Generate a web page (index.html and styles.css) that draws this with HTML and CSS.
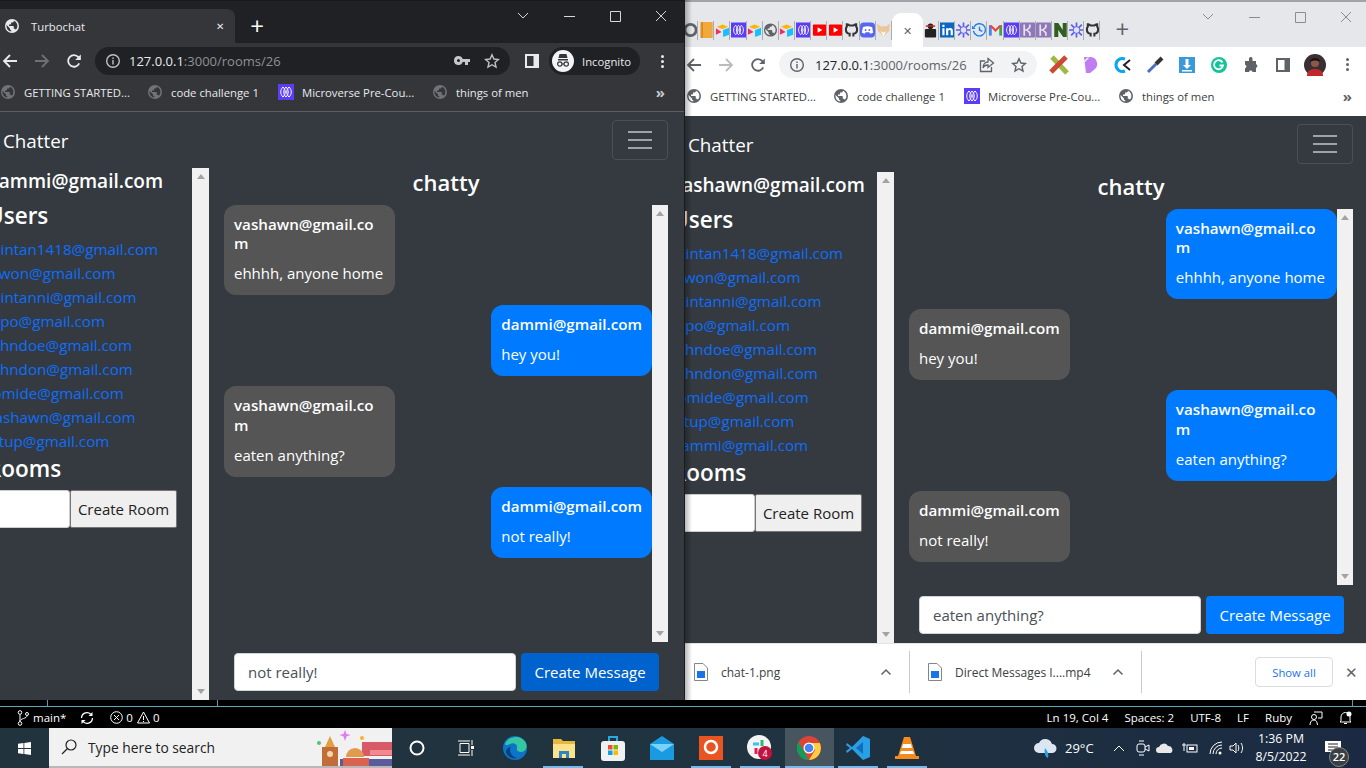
FILE: index.html
```html
<!DOCTYPE html>
<html lang="en">
<head>
<meta charset="utf-8">
<title>Turbochat</title>
<link rel="stylesheet" href="styles.css">
</head>
<body>
<svg class="defs" width="0" height="0" aria-hidden="true">
  <symbol id="globe" viewBox="0 0 16 16"><path fill="currentColor" fill-rule="evenodd" d="M8 1a7 7 0 1 0 0 14A7 7 0 0 0 8 1zM7.3 13.5A5.6 5.6 0 0 1 2.5 8c0-.4 0-.7.1-1L6 10.4v.7c0 .8.6 1.4 1.3 1.4zm4.5-1.8c-.2-.6-.7-1-1.3-1h-.7V8.6c0-.4-.3-.7-.7-.7H5V6.5h1.4c.4 0 .7-.3.7-.7V4.4h1.4c.8 0 1.4-.6 1.4-1.4v-.3c2 .8 3.5 2.8 3.5 5.2 0 1.5-.6 2.8-1.6 3.8z"/></symbol>
  <symbol id="back" viewBox="0 0 16 16"><path fill="none" stroke="currentColor" stroke-width="1.8" d="M15 8H2M8 2 2 8l6 6"/></symbol>
  <symbol id="fwd" viewBox="0 0 16 16"><path fill="none" stroke="currentColor" stroke-width="1.8" d="M1 8h13M8 2l6 6-6 6"/></symbol>
  <symbol id="reload" viewBox="0 0 16 16"><path fill="none" stroke="currentColor" stroke-width="1.8" d="M13.2 10.4A5.8 5.8 0 1 1 12.4 4.2L14 6"/><path fill="currentColor" d="M14.8 1.5v5.6H9.2z"/></symbol>
  <symbol id="info" viewBox="0 0 16 16"><circle cx="8" cy="8" r="6.3" fill="none" stroke="currentColor" stroke-width="1.4"/><path fill="currentColor" d="M7.3 7h1.4v4.5H7.3zM7.3 4.4h1.4v1.5H7.3z"/></symbol>
  <symbol id="star" viewBox="0 0 16 16"><path fill="none" stroke="currentColor" stroke-width="1.4" d="m8 1.8 1.9 4.2 4.5.5-3.4 3 1 4.5L8 11.7 4 14l1-4.5-3.4-3 4.5-.5z"/></symbol>
  <symbol id="side" viewBox="0 0 16 16"><path fill="currentColor" fill-rule="evenodd" d="M1 1h14v14H1zM3 3v10h6.5V3z"/></symbol>
  <symbol id="micro" viewBox="0 0 16 16"><rect width="16" height="16" fill="#5b3df5"/><path fill="none" stroke="#fff" stroke-width="1" d="M5 3c-3 3-3 7 0 10 3-3 3-7 0-10zM8 3c-3 3-3 7 0 10 3-3 3-7 0-10zM11 3c-3 3-3 7 0 10 3-3 3-7 0-10z"/></symbol>
  <symbol id="air" viewBox="0 0 16 16"><path fill="#fcb400" d="m8 2 6 2.5L8 7 2 4.5z"/><path fill="#18bfff" d="M8.6 8 15 5.5V13l-6.400 2.500z"/><path fill="#f82b60" d="M1 6v7l6-3z"/></symbol>
  <symbol id="yt" viewBox="0 0 16 16"><rect x="1" y="2" width="14" height="12" rx="1" fill="#f00"/><path fill="#fff" d="M6 5v6l5-3z"/></symbol>
  <symbol id="gh" viewBox="0 0 16 16"><path fill="none" stroke="#333" stroke-width="2.200" d="M6 15v-3C3 12 2 10 2 7c0-1 .5-2 1-2.700V2c1 0 2 .5 3 1.200h4c1-.7 2-1.200 3-1.200v2.300c.5.7 1 1.700 1 2.700 0 3-1 5-4 5v3"/></symbol>
  <symbol id="spark" viewBox="0 0 16 16"><g stroke="#5b5fe8" stroke-width="1.800"><path d="M8 0v16M0 8h16M2.300 2.300l11.400 11.400M13.700 2.300 2.300 13.700"/></g><circle cx="8" cy="8" r="3.600" fill="#e0e2ff" stroke="#5b5fe8"/></symbol>
  <symbol id="hk" viewBox="0 0 16 16"><rect width="16" height="16" rx="1" fill="#8e78b8"/><path fill="none" stroke="#e8e2f2" stroke-width="1.800" d="M4.500 2v12M4.500 8h3l3-3V2M7.500 8l3 3v3"/></symbol>
  <symbol id="chev" viewBox="0 0 12 12"><path fill="none" stroke="currentColor" stroke-width="1.500" d="m1.500 8.500 4.500-4.500 4.500 4.500"/></symbol>
  <symbol id="file" viewBox="0 0 14 18"><path fill="#fff" stroke="#80868b" d="M.5.500h8.500l4.500 4.500v12.500H.5z"/><rect x="3" y="8" width="8" height="7" fill="#1a73e8"/></symbol>
</svg>

<main class="desktop">
  <section class="win win-dark">
    <div class="strip">
      <div class="dark-tab"><svg class="ic16" width="16" height="16"><use href="#globe"/></svg><span class="tab-title">Turbochat</span><span class="tab-x">✕</span></div>
      <span class="plus">+</span>
      <div class="caps">
        <span class="cap"><svg width="12" height="8" viewBox="0 0 12 8"><path fill="none" stroke="currentColor" d="m1 1 5 5 5-5"/></svg></span>
        <span class="cap"><svg width="11" height="11" viewBox="0 0 11 11"><path stroke="currentColor" d="M0 5.500h11"/></svg></span>
        <span class="cap"><svg width="11" height="11" viewBox="0 0 11 11"><path fill="none" stroke="currentColor" d="M.5.500h10v10H.5z"/></svg></span>
        <span class="cap"><svg width="12" height="12" viewBox="0 0 12 12"><path stroke="currentColor" d="m1 1 10 10M11 1 1 11"/></svg></span>
      </div>
    </div>
    <div class="bar bar-dark">
      <span class="btn"><svg width="16" height="16"><use href="#back"/></svg></span>
      <span class="btn btn-dim"><svg width="16" height="16"><use href="#fwd"/></svg></span>
      <span class="btn"><svg width="16" height="16"><use href="#reload"/></svg></span>
      <div class="omni omni-dark">
        <svg class="omni-info" width="16" height="16"><use href="#info"/></svg>
        <span class="url"><b>127.0.0.1</b>:3000/rooms/26</span>
        <svg class="key" width="16" height="10" viewBox="0 0 16 10"><path fill="currentColor" fill-rule="evenodd" d="M4.500 0a4.500 4.500 0 0 1 4.200 3H16v3h-2v3h-3V6H8.700A4.500 4.500 0 1 1 4.500 0zm0 3a1.500 1.500 0 1 0 0 3 1.500 1.500 0 0 0 0-3z"/></svg>
        <svg class="omni-star" width="16" height="16"><use href="#star"/></svg>
      </div>
      <span class="btn btn-side"><svg width="16" height="16"><use href="#side"/></svg></span>
      <div class="pill">
        <svg width="22" height="22" viewBox="0 0 22 22"><circle cx="11" cy="11" r="11" fill="#f1f3f4"/><path fill="#35363a" d="M6 9h10v1.400H6zM7.500 4h7l1 4h-9z"/><g fill="none" stroke="#35363a" stroke-width="1.200"><circle cx="7.800" cy="14" r="2.200"/><circle cx="14.200" cy="14" r="2.200"/><path d="M10 14h2"/></g></svg>
        <span>Incognito</span>
      </div>
      <span class="dots"><i></i><i></i><i></i></span>
    </div>
    <div class="marks marks-dark">
      <span class="bm bm1"><svg class="ic16 globe-dim" width="16" height="16"><use href="#globe"/></svg>GETTING STARTED...</span>
      <span class="bm bm2"><svg class="ic16 globe-dim" width="16" height="16"><use href="#globe"/></svg>code challenge 1</span>
      <span class="bm bm3"><svg class="ic16" width="16" height="16"><use href="#micro"/></svg>Microverse Pre-Cou...</span>
      <span class="bm"><svg class="ic16 globe-dim" width="16" height="16"><use href="#globe"/></svg>things of men</span>
      <span class="more">»</span>
    </div>
    <div class="page">
      <nav class="nav"><span class="brand">Chatter</span><span class="burger"><i></i><i></i><i></i></span></nav>
      <div class="row">
        <aside class="side">
          <h5 class="me">dammi@gmail.com</h5>
          <h3 class="head">Users</h3>
          <a class="user">faintan1418@gmail.com</a><a class="user">kiwon@gmail.com</a><a class="user">faintanni@gmail.com</a><a class="user">dipo@gmail.com</a><a class="user">johndoe@gmail.com</a><a class="user">johndon@gmail.com</a><a class="user">tomide@gmail.com</a><a class="user">vashawn@gmail.com</a><a class="user">kitup@gmail.com</a>
          <h3 class="head">Rooms</h3>
          <div class="room"><input class="room-in" type="text" aria-label="Room"><button class="room-btn">Create Room</button></div>
        </aside>
        <div class="track track-side"><i class="up"></i><i class="down"></i></div>
        <div class="chat">
          <h4 class="title">chatty</h4>
          <div class="scrollwrap">
            <div class="msgs">
              <div class="bub bub-wide other"><h6 class="who">vashawn@gmail.co<br>m</h6><p class="say">ehhhh, anyone home</p></div>
              <div class="bub mine"><h6 class="who">dammi@gmail.com</h6><p class="say">hey you!</p></div>
              <div class="bub bub-wide other"><h6 class="who">vashawn@gmail.co<br>m</h6><p class="say">eaten anything?</p></div>
              <div class="bub mine"><h6 class="who">dammi@gmail.com</h6><p class="say">not really!</p></div>
            </div>
            <div class="track track-msg"><i class="up"></i><i class="down"></i></div>
          </div>
          <form class="send"><input class="send-in" type="text" value="not really!" aria-label="Message"><button class="send-btn send-active" type="button">Create Message</button></form>
        </div>
      </div>
    </div>
  </section>

  <section class="win win-light">
    <div class="strip strip-light">
      <div class="tabs">
        <span class="t"><svg width="16" height="16" viewBox="0 0 16 16"><circle cx="8" cy="8" r="6" fill="none" stroke="#5f6368" stroke-width="3"/></svg></span>
        <span class="t"><svg width="16" height="18" viewBox="0 0 16 18"><rect x="1" y="0" width="14" height="18" rx="1" fill="#f2a93b"/><path stroke="#b36f10" d="M3 0v18"/></svg></span>
        <span class="t"><svg width="16" height="16"><use href="#air"/></svg></span>
        <span class="t"><svg width="16" height="16"><use href="#micro"/></svg></span>
        <span class="t"><svg width="16" height="16"><use href="#air"/></svg></span>
        <span class="t t-gray"><svg width="16" height="16"><use href="#globe"/></svg></span>
        <span class="t"><svg width="16" height="16"><use href="#air"/></svg></span>
        <span class="t"><svg width="16" height="16"><use href="#micro"/></svg></span>
        <span class="t"><svg width="16" height="16"><use href="#yt"/></svg></span>
        <span class="t"><svg width="16" height="16"><use href="#yt"/></svg></span>
        <span class="t"><svg width="16" height="16"><use href="#gh"/></svg></span>
        <span class="t"><svg width="16" height="16" viewBox="0 0 16 16"><rect width="16" height="16" rx="4" fill="#5865f2"/><path fill="#fff" d="M3 5c3-1.500 7-1.500 10 0l1 6-3 1-1-1.500H6L5 12l-3-1z"/><circle cx="6" cy="8" r="1" fill="#5865f2"/><circle cx="10" cy="8" r="1" fill="#5865f2"/></svg></span>
        <span class="t"><svg width="16" height="16" viewBox="0 0 16 16"><path fill="#e9c79a" d="m1 1 4 3h6l4-3-1 8-6 6-6-6z"/><path fill="#fff" d="m5 9 3 6 3-6-3 2z"/></svg></span>
        <span class="active-tab">✕</span>
        <span class="t"><svg width="16" height="16" viewBox="0 0 16 16"><rect x="2" y="7" width="12" height="9" rx="1" fill="#222"/><circle cx="8" cy="4" r="3" fill="#222"/><path fill="#d92020" d="M3 3h10v1.500H3z"/></svg></span>
        <span class="t"><svg width="16" height="16" viewBox="0 0 16 16"><rect width="16" height="16" fill="#0a66c2"/><path fill="#fff" d="M2.500 6h2.300v7.500H2.500zM2.500 2.500h2.300v2.300H2.500zM6.500 6h2.200v1c1-1.600 5-1.700 5 1.800v4.700h-2.300V9.500c0-2-2.600-1.800-2.600 0v4H6.500z"/></svg></span>
        <span class="t"><svg width="16" height="16"><use href="#spark"/></svg></span>
        <span class="t"><svg width="16" height="16" viewBox="0 0 16 16"><path fill="none" stroke="#1a80e8" stroke-width="1.500" d="M2 5a6.500 6.500 0 1 1-.5 4M8 4.500V8l3 1.500"/><path fill="#1a80e8" d="M0 3.500 4 7H0z"/></svg></span>
        <span class="t"><svg width="16" height="16" viewBox="0 0 16 16"><path fill="#4285f4" d="M1 3h3v11H1z"/><path fill="#34a853" d="M12 3h3v11h-3z"/><path fill="#ea4335" d="m1 3 3 0 4 4 4-4h3L8 10z"/></svg></span>
        <span class="t"><svg width="16" height="16"><use href="#micro"/></svg></span>
        <span class="t"><svg width="16" height="16"><use href="#hk"/></svg></span>
        <span class="t"><svg width="16" height="16"><use href="#hk"/></svg></span>
        <span class="t"><svg width="16" height="18" viewBox="0 0 16 18"><path fill="#2f5e1e" d="M1 1h4.500l5 8V1H15v16h-4L5.500 9v8H1z"/></svg></span>
        <span class="t"><svg width="16" height="16"><use href="#spark"/></svg></span>
        <span class="t"><svg width="16" height="16"><use href="#gh"/></svg></span>
      </div>
      <span class="plus plus-light">+</span>
      <div class="caps caps-light">
        <span class="cap"><svg width="12" height="8" viewBox="0 0 12 8"><path fill="none" stroke="currentColor" d="m1 1 5 5 5-5"/></svg></span>
        <span class="cap"><svg width="11" height="11" viewBox="0 0 11 11"><path stroke="currentColor" d="M0 5.500h11"/></svg></span>
        <span class="cap"><svg width="11" height="11" viewBox="0 0 11 11"><path fill="none" stroke="currentColor" d="M.5.500h10v10H.5z"/></svg></span>
        <span class="cap"><svg width="12" height="12" viewBox="0 0 12 12"><path stroke="currentColor" d="m1 1 10 10M11 1 1 11"/></svg></span>
      </div>
    </div>
    <div class="bar bar-light">
      <span class="btn"><svg width="16" height="16"><use href="#back"/></svg></span>
      <span class="btn btn-dim-light"><svg width="16" height="16"><use href="#fwd"/></svg></span>
      <span class="btn"><svg width="16" height="16"><use href="#reload"/></svg></span>
      <div class="omni omni-light">
        <svg class="omni-info" width="16" height="16"><use href="#info"/></svg>
        <span class="url"><b>127.0.0.1</b>:3000/rooms/26</span>
        <svg class="share" width="16" height="16" viewBox="0 0 16 16"><path fill="none" stroke="currentColor" stroke-width="1.300" d="M6 4H1.500v10.500h11V10M9 1.500 14.500 6 9 10.500V8C6 8 4.500 9.500 4 11c0-3.500 2-6 5-6z"/></svg>
        <svg class="omni-star" width="16" height="16"><use href="#star"/></svg>
      </div>
      <div class="exts">
        <span class="ext"><svg width="20" height="20" viewBox="0 0 20 20"><path stroke="#9bbb45" stroke-width="5" d="m3 2 15 16"/><path stroke="#cc4a33" stroke-width="5" d="M17 2 2 17"/></svg></span>
        <span class="ext"><svg width="18" height="18" viewBox="0 0 18 18"><path fill="#c07df2" d="M2 1h7a7 7 0 0 1 4 12l-5 4H4z"/><path fill="#f1f3f4" d="m1 6 5-5 1 1-6 6z"/></svg></span>
        <span class="ext"><svg width="18" height="18" viewBox="0 0 18 18"><path fill="none" stroke="#0aa5f0" stroke-width="3" d="M11 3a6.500 6.500 0 1 0 0 12"/><path fill="none" stroke="#222" stroke-width="2" d="m16 4-6 5 6 5"/></svg></span>
        <span class="ext"><svg width="18" height="18" viewBox="0 0 18 18"><path stroke="#4d6cc4" stroke-width="3" d="m2 16 8-8"/><path stroke="#333" stroke-width="4" d="m10 8 6-6"/></svg></span>
        <span class="ext"><svg width="16" height="16" viewBox="0 0 16 16"><rect width="16" height="16" fill="#3a9ad9"/><path fill="#fff" d="M6.500 2h3v6H12l-4 4-4-4h2.500zM3 13h10v1.500H3z"/></svg></span>
        <span class="ext"><svg width="16" height="16" viewBox="0 0 16 16"><circle cx="8" cy="8" r="8" fill="#15c39a"/><path fill="none" stroke="#fff" stroke-width="1.800" d="M11.500 5.500a4.500 4.500 0 1 0 .5 3H8.500"/></svg></span>
        <span class="ext ext-gray"><svg width="16" height="16" viewBox="0 0 16 16"><path fill="currentColor" d="M6 1.500a1.800 1.800 0 0 1 3.500 0V4H13v3.300a1.800 1.800 0 0 1 0 3.500V15H9.500a1.800 1.800 0 0 0-3.500 0H2v-3.800a1.800 1.800 0 0 0 0-3.500V4h4z"/></svg></span>
        <span class="ext ext-gray"><svg width="16" height="16"><use href="#side"/></svg></span>
        <span class="ext"><svg width="22" height="22" viewBox="0 0 22 22"><circle cx="11" cy="11" r="11" fill="#3a2f32"/><path fill="#c0282c" d="M3 22c0-5 3-7 8-7s8 2 8 7z"/><circle cx="11" cy="9" r="4" fill="#8a5a44"/><path fill="#15110f" d="M6 8c0-5 10-5 10 0-3-2-7-2-10 0z"/></svg></span>
        <span class="dots dots-light"><i></i><i></i><i></i></span>
      </div>
    </div>
    <div class="marks marks-light">
      <span class="bm bm1"><svg class="ic16" width="16" height="16"><use href="#globe"/></svg>GETTING STARTED...</span>
      <span class="bm bm2"><svg class="ic16" width="16" height="16"><use href="#globe"/></svg>code challenge 1</span>
      <span class="bm bm3"><svg class="ic16" width="16" height="16"><use href="#micro"/></svg>Microverse Pre-Cou...</span>
      <span class="bm"><svg class="ic16" width="16" height="16"><use href="#globe"/></svg>things of men</span>
      <span class="more">»</span>
    </div>
    <div class="page">
      <nav class="nav"><span class="brand">Chatter</span><span class="burger"><i></i><i></i><i></i></span></nav>
      <div class="row">
        <aside class="side">
          <h5 class="me">vashawn@gmail.com</h5>
          <h3 class="head">Users</h3>
          <a class="user">faintan1418@gmail.com</a><a class="user">kiwon@gmail.com</a><a class="user">faintanni@gmail.com</a><a class="user">dipo@gmail.com</a><a class="user">johndoe@gmail.com</a><a class="user">johndon@gmail.com</a><a class="user">tomide@gmail.com</a><a class="user">kitup@gmail.com</a><a class="user">dammi@gmail.com</a>
          <h3 class="head">Rooms</h3>
          <div class="room"><input class="room-in" type="text" aria-label="Room"><button class="room-btn">Create Room</button></div>
        </aside>
        <div class="track track-side"><i class="up"></i><i class="down"></i></div>
        <div class="chat">
          <h4 class="title">chatty</h4>
          <div class="scrollwrap">
            <div class="msgs">
              <div class="bub bub-wide mine"><h6 class="who">vashawn@gmail.co<br>m</h6><p class="say">ehhhh, anyone home</p></div>
              <div class="bub other"><h6 class="who">dammi@gmail.com</h6><p class="say">hey you!</p></div>
              <div class="bub bub-wide mine"><h6 class="who">vashawn@gmail.co<br>m</h6><p class="say">eaten anything?</p></div>
              <div class="bub other"><h6 class="who">dammi@gmail.com</h6><p class="say">not really!</p></div>
            </div>
            <div class="track track-msg"><i class="up"></i><i class="down"></i></div>
          </div>
          <form class="send"><input class="send-in" type="text" value="eaten anything?" aria-label="Message"><button class="send-btn" type="button">Create Message</button></form>
        </div>
      </div>
    </div>
    <div class="downloads">
      <span class="dl dl1"><svg width="14" height="18"><use href="#file"/></svg><span class="dl-name">chat-1.png</span><svg class="dl-chev" width="12" height="12"><use href="#chev"/></svg></span>
      <span class="dl dl2"><svg width="14" height="18"><use href="#file"/></svg><span class="dl-name">Direct Messages I....mp4</span><svg class="dl-chev" width="12" height="12"><use href="#chev"/></svg></span>
      <span class="show">Show all</span>
      <span class="dl-x">✕</span>
    </div>
  </section>

  <div class="seam"><i class="s1"></i><i class="s2"></i><i class="s3"></i></div>
  <footer class="status">
    <svg class="git" width="12" height="16" viewBox="0 0 12 16"><g fill="none" stroke="#fff"><circle cx="3" cy="2.500" r="1.800"/><circle cx="3" cy="13.500" r="1.800"/><circle cx="10" cy="4" r="1.500"/><path d="M3 4.500v7M10 5.500C10 9 3 8 3 11.500"/></g></svg>
    <span class="st-main">main*</span>
    <svg class="sync" width="14" height="14" viewBox="0 0 14 14"><path fill="none" stroke="#fff" stroke-width="1.300" d="M1.500 7a5.500 5.500 0 0 1 10-3M12.500 7a5.500 5.500 0 0 1-10 3"/><path fill="#fff" d="M12.500 1v4h-4zM1.500 13V9h4z"/></svg>
    <svg class="err" width="13" height="13" viewBox="0 0 13 13"><circle cx="6.500" cy="6.500" r="5.800" fill="none" stroke="#fff"/><path stroke="#fff" d="m4 4 5 5M9 4 4 9"/></svg><span class="num">0</span>
    <svg class="warn" width="13" height="13" viewBox="0 0 13 13"><path fill="none" stroke="#fff" d="M6.500 1 12.500 12H.5zM6.500 5v4M6.500 10v1"/></svg><span class="num">0</span>
    <span class="st-right">
      <span class="st1">Ln 19, Col 4</span><span class="st2">Spaces: 2</span><span class="st3">UTF-8</span><span class="st4">LF</span><span class="st5">Ruby</span>
      <svg class="st-person" width="14" height="14" viewBox="0 0 14 14"><g fill="none" stroke="#fff"><path d="M5 1h8v6H9"/><circle cx="5" cy="6" r="2.500"/><path d="M1 14c0-3 1.500-5 4-5s3 2 3.500 5"/></g></svg>
      <svg class="st-bell" width="13" height="14" viewBox="0 0 13 14"><path fill="none" stroke="#fff" d="M2 10V6a4.500 4.500 0 0 1 9 0v4l1 1H1zM5 12.500h3"/><circle cx="10" cy="3" r="2.500" fill="#fff"/></svg>
    </span>
  </footer>
  <div class="taskbar">
    <span class="start"><svg width="13" height="13" viewBox="0 0 13 13"><path fill="#fff" d="M0 1.800 5.500 1v5H0zM6.300.9 13 0v6H6.300zM0 7h5.500v5L0 11.200zM6.300 7H13v6l-6.700-.9z"/></svg></span>
    <div class="search">
      <svg class="lens" width="16" height="16" viewBox="0 0 16 16"><circle cx="10" cy="6" r="5" fill="none" stroke="#222" stroke-width="1.200"/><path stroke="#222" stroke-width="1.200" d="m6.500 9.500-5.500 5.500"/></svg>
      <span class="search-txt">Type here to search</span>
      <svg class="art" width="92" height="40" viewBox="0 0 92 40"><circle cx="19" cy="16" r="2" fill="#4cc76a"/><path fill="#e27bee" d="m45 3 1.500 4 4 1-4 1.500L45 14l-1.500-4.500-4-1.500 4-1z"/><circle cx="62" cy="11" r="2" fill="#f6b52c"/><path fill="#c26c3a" d="M22 20h16v20H22z"/><path fill="#e0a040" d="m25 20 5-11 5 11z"/><circle cx="30" cy="27" r="3" fill="#f3d9a5"/><path fill="#d85a66" d="M62 15h30v14H62z"/><path fill="#f08a90" d="M70 23h22v5H70z"/><path fill="#5a5a9c" d="M40 32h52v8H40z"/><path fill="#e29a4c" d="M46 30a9 9 0 0 1 18 0z"/><path fill="#d9634f" d="M43 31h26v9H43z"/></svg>
    </div>
    <div class="apps">
      <span class="app"><svg width="16" height="16" viewBox="0 0 16 16"><circle cx="8" cy="8" r="6.500" fill="none" stroke="#fff" stroke-width="2"/></svg></span>
      <span class="app"><svg width="16" height="16" viewBox="0 0 16 16"><g fill="none" stroke="#fff"><path d="M2 3.500h9v9H2zM0 1h12M0 15h12M14 0v5M14 10v6"/></g><rect x="13" y="6" width="3" height="3" fill="#fff"/></svg></span>
      <span class="app"><svg width="24" height="24" viewBox="0 0 24 24"><circle cx="12" cy="12" r="12" fill="#0c74c9"/><path fill="#35c7a0" d="M2 8C5 0 18-2 23 7c2 5-1 9-5 9-3 0-5-2-4-4 1-3-3-6-7-4-2 1-4 2-5 0z"/><path fill="#07407e" d="M7 14c0 4 3 7 7 8-6 1-10-2-11-6 0-3 3-5 5-5-1 1-1 2-1 3z"/></svg></span>
      <span class="app app-on"><svg width="24" height="22" viewBox="0 0 24 22"><path fill="#e8b73c" d="M1 2h8l2 2h12v17H1z"/><path fill="#fbe28b" d="M1 7h22v14H1z"/><path fill="#2a86c8" d="M7 14h10v7h-3v-4h-4v4H7z"/></svg></span>
      <span class="app"><svg width="24" height="26" viewBox="0 0 24 26"><path fill="none" stroke="#2aa9e0" stroke-width="2" d="M8 7V2h8v5"/><rect y="6" width="24" height="20" rx="3" fill="#f1f1f1"/><path fill="#f25022" d="M7 10h4.500v4.500H7z"/><path fill="#7fba00" d="M12.500 10H17v4.500h-4.500z"/><path fill="#00a4ef" d="M7 15.500h4.500V20H7z"/><path fill="#ffb900" d="M12.500 15.500H17V20h-4.500z"/></svg></span>
      <span class="app"><svg width="24" height="24" viewBox="0 0 24 24"><path fill="#1a9ae0" d="M0 8 12 0l12 8v16H0z"/><path fill="#7ad3f7" d="M0 8h24L12 16z"/></svg></span>
      <span class="app app-on"><svg width="24" height="24" viewBox="0 0 24 24"><rect width="24" height="24" fill="#e95420"/><circle cx="12" cy="11" r="6" fill="none" stroke="#fff" stroke-width="2.500"/><circle cx="12" cy="11" r="2" fill="#e95420"/></svg></span>
      <span class="app app-on"><svg width="26" height="26" viewBox="0 0 26 26"><circle cx="12" cy="12" r="12" fill="#f4f4f4"/><path stroke="#36c5f0" stroke-width="3" d="M6 9h6"/><path stroke="#2eb67d" stroke-width="3" d="M15 5v6"/><path stroke="#e01e5a" stroke-width="3" d="M9 13v6"/><circle cx="18" cy="18" r="7" fill="#c4123f"/><text class="badge-num" x="18" y="22" text-anchor="middle">4</text></svg></span>
      <span class="app app-on is-active"><svg width="24" height="24" viewBox="0 0 24 24"><circle cx="12" cy="12" r="12" fill="#db4437"/><path fill="#0f9d58" d="M1.500 6 8 17l4 7A12 12 0 0 1 1.500 6z"/><path fill="#ffcd40" d="M12 7h10.800a12 12 0 0 1-10.800 17l6-10z"/><circle cx="12" cy="12" r="5.500" fill="#fff"/><circle cx="12" cy="12" r="4.300" fill="#4285f4"/></svg></span>
      <span class="app app-on"><svg width="24" height="24" viewBox="0 0 24 24"><path fill="#2b9fe6" d="M17 0 24 3v18l-7 3L6 13 1 17l-1-2 4-3-4-3 1-2 5 4z"/><path fill="#0d6fb8" d="M17 6 10 12l7 6z"/></svg></span>
      <span class="app app-on"><svg width="24" height="24" viewBox="0 0 24 24"><path fill="#f58a1f" d="M9 1h6l6 19h3v3H0v-3h3z"/><path fill="#fff" d="M8 8h8l1 4H7zM6 15h12l1 3H5z"/></svg></span>
    </div>
    <div class="tray">
      <svg class="tr-cloud" width="24" height="24" viewBox="0 0 24 24"><path fill="#dbe6f2" d="M6 17a5 5 0 0 1 0-10 7 7 0 0 1 13 1 4.500 4.500 0 0 1 0 9z"/><path fill="#2a9fe0" d="M12 12c3 3 4 7 3 10-3-1-4-5-3-10z"/></svg>
      <span class="tr-temp">29°C</span>
      <svg class="tr-up" width="12" height="8" viewBox="0 0 12 8"><path fill="none" stroke="#fff" d="m1 7 5-5 5 5"/></svg>
      <svg class="tr-meet" width="14" height="16" viewBox="0 0 14 16"><g fill="none" stroke="#fff"><rect x="1" y="4" width="8" height="8" rx="2"/><path d="m9 7 4-2v6l-4-2M3 1h5M3 15h5"/></g></svg>
      <svg class="tr-drive" width="17" height="10" viewBox="0 0 17 10"><path fill="#e8e8e8" d="M3 10a3 3 0 0 1 0-6 5 5 0 0 1 9-1 4 4 0 0 1 3 7z"/></svg>
      <svg class="tr-bat" width="16" height="12" viewBox="0 0 16 12"><g fill="none" stroke="#fff"><rect x="5" y="3" width="10" height="7"/><path d="M0 3h4M2 1v8"/></g><rect x="7" y="5" width="5" height="3" fill="#fff"/></svg>
      <svg class="tr-wifi" width="14" height="14" viewBox="0 0 14 14"><g fill="none" stroke="#fff"><path d="M1 13A12 12 0 0 1 13 1M4 13a9 9 0 0 1 9-9M7 13a6 6 0 0 1 6-6"/></g><circle cx="11" cy="12" r="1.500" fill="#fff"/></svg>
      <svg class="tr-vol" width="16" height="14" viewBox="0 0 16 14"><g fill="none" stroke="#fff"><path d="M1 5h3l3-3v10L4 9H1zM9 4c1 2 1 4 0 6M12 2c2 3 2 7 0 10"/></g></svg>
      <span class="clock"><span>1:36 PM</span><span>8/5/2022</span></span>
      <span class="notif"><svg width="16" height="14" viewBox="0 0 16 14"><path fill="#fff" d="M0 0h16v11H0z"/><path stroke="#222" d="M3 3h10M3 6h10M3 9h7"/></svg><span class="notif-n">22</span></span>
    </div>
  </div>
</main>
</body>
</html>
```

FILE: styles.css
```css
* { box-sizing: border-box; }
html, body { margin: 0; height: 100%; background: #000; }
body { overflow: hidden; font-family: "Open Sans", "Noto Sans", sans-serif; font-size: 15px; color: #fff; }
.defs { position: absolute; }
.desktop { position: relative; width: 1366px; height: 768px; overflow: hidden; background: #000; }
svg { display: block; flex: none; }

/* windows sit on a free desktop */
.win { position: absolute; top: 0; height: 700px; display: flex; flex-direction: column; overflow: hidden; }
.win-dark { left: 0; width: 685px; background: #202124; border-right: 1px solid #1a1b1e; }
.win-light { left: 685px; width: 681px; background: #fff; }
.win-light::after { content: ""; position: absolute; inset: 0 auto 0 0; width: 7px; background: linear-gradient(90deg, rgba(0,0,0,.28), rgba(0,0,0,0)); pointer-events: none; }

/* tab strips */
.strip { flex: none; height: 43px; display: flex; align-items: flex-end; background: #202124; border-top: 1px solid #17181a; }
.dark-tab { width: 235px; height: 34px; background: #35363a; border-radius: 0 8px 0 0; display: flex; align-items: center; padding-left: 4px; font-size: 11.300px; color: #e8eaed; }
.tab-title { margin-left: 11px; }
.tab-x { margin-left: auto; margin-right: 11px; font-size: 10px; }
.plus { width: 24px; margin: 0 0 5px 10px; text-align: center; font-size: 24px; line-height: 24px; font-weight: 400; }
.caps { margin-left: auto; display: flex; align-self: flex-start; color: #d6d7d9; }
.cap { width: 46px; height: 30px; display: flex; align-items: center; justify-content: center; }
.strip-light { height: 47px; background: #e5e7eb; border-top: 2px solid #a0a2a6; }
.tabs { display: flex; align-items: flex-end; margin-left: -3px; }
.t { width: 16.150px; height: 26px; padding-bottom: 8px; display: flex; align-items: center; justify-content: center; position: relative; }
.t svg { width: 15px; height: 16px; }
.t::after { content: ""; position: absolute; right: 0; top: 0; bottom: 7px; width: 1px; background: #a9acb2; }
.t-gray { color: #5f6368; }
.active-tab { width: 31px; height: 34px; background: #fff; border-radius: 9px 9px 0 0; display: flex; align-items: center; justify-content: center; color: #5f6368; font-size: 11px; }
.plus-light { color: #5f6368; margin-bottom: 6px; font-size: 24px; }
.caps-light { color: #8a8c90; margin-right: -3px; }

/* toolbars */
.bar { flex: none; height: 36px; display: flex; align-items: center; }
.bar-dark { background: #35363a; color: #e8eaed; }
.bar-light { background: #fff; height: 35px; color: #5f6368; }
.btn { width: 32px; height: 32px; display: flex; align-items: center; justify-content: center; flex: none; }
.bar-dark .btn:first-child { margin-left: -6px; }
.bar-light .btn:first-child { margin-left: -7px; }
.btn-dim { color: #6e7074; }
.btn-dim-light { color: #babcbe; }
.btn-side { margin-left: 6px; }
.omni { height: 28px; border-radius: 14px; display: flex; align-items: center; font-size: 13px; flex: none; }
.omni-dark { width: 415px; margin-left: 5px; background: #202124; color: #bdc1c6; }
.omni-light { width: 258px; height: 27px; margin-left: 5px; background: #f1f3f4; color: #5f6368; }
.omni-info { margin-left: 10px; }
.url { margin-left: 8px; color: #8d9195; white-space: nowrap; }
.url b { font-weight: 400; color: #e8eaed; }
.omni-light .url { margin-left: 10px; color: #5f6368; }
.omni-light .url b { color: #202124; }
.key { margin-left: auto; margin-right: 14px; color: #c4c7cb; }
.omni-star { margin-right: 10px; }
.share { margin-left: auto; margin-right: 16px; }
.pill { width: 91px; height: 28px; margin-left: 1px; border-radius: 14px; background: #202124; display: flex; align-items: center; padding-left: 3px; gap: 8px; font-size: 11.300px; color: #e8eaed; flex: none; }
.dots { width: 32px; margin-left: 6px; display: flex; flex-direction: column; align-items: center; gap: 2px; flex: none; }
.dots i { width: 3px; height: 3px; border-radius: 50%; background: currentColor; }
.exts { display: flex; align-items: center; margin-left: 6px; }
.ext { width: 32px; display: flex; justify-content: center; flex: none; }
.ext-gray { color: #5f6368; }
.dots-light { margin-left: 0; color: #5f6368; }

/* bookmarks */
.marks { flex: none; display: flex; align-items: center; font-size: 11.300px; white-space: nowrap; }
.marks-dark { background: #35363a; border-bottom: 1px solid #5d5e61; color: #e8eaed; height: 33px; padding-bottom: 6px; }
.marks-light { background: #fff; height: 34px; color: #3c4043; padding: 0 0 6px 1px; }
.bm { display: flex; align-items: center; }
.bm .ic16 { margin-right: 8px; }
.bm1 { width: 147px; }
.bm2 { width: 131px; }
.bm3 { width: 154px; }
.globe-dim { color: #6f7276; }
.marks-light .ic16 { color: #5f6368; }
.more { margin-left: auto; margin-right: 19px; font-size: 15px; font-weight: 700; color: #c8c9cb; }
.marks-light .more { color: #5f6368; margin-right: 14px; }

/* app page */
.page { flex: 1; min-height: 0; width: 685px; background: #343a40; display: flex; flex-direction: column; overflow: hidden; }
.nav { flex: none; height: 56px; display: flex; align-items: center; justify-content: space-between; padding: 0 17px 0 3px; }
.brand { font-size: 18.800px; line-height: 1; padding-top: 2px; color: #fff; }
.burger { width: 56px; height: 40px; border: 1px solid #4b5055; border-radius: 4px; display: flex; flex-direction: column; justify-content: center; align-items: center; gap: 6px; }
.burger i { width: 24px; height: 2px; background: #a0a2a4; }
.row { flex: 1; min-height: 0; display: flex; }
.side { width: 205px; margin-left: -13px; flex: none; overflow: hidden; padding-top: 1px; white-space: nowrap; }
.me { margin: 0; font-size: 19px; line-height: 24px; font-weight: 600; color: #fff; }
.head { margin: 8px 0 7px; font-size: 22.500px; line-height: 29px; font-weight: 600; color: #fff; }
.user { display: block; height: 24px; line-height: 24px; font-size: 15.200px; color: #0d6efd; }
.user + .head { margin: 1px 0 7px; }
.room { display: flex; }
.room-in { width: 83px; height: 38px; border: 1px solid #ccc; background: #fff; border-radius: 3px; padding: 0; flex: none; }
.room-btn { width: 107px; height: 38px; padding: 0; flex: none; font: inherit; background: #efefef; color: #222; border: 1px solid #767676; border-radius: 2px; }
.track { width: 17px; flex: none; background: #f1f1f1; position: relative; }
.track i { position: absolute; left: 50%; margin-left: -4px; border-left: 4px solid transparent; border-right: 4px solid transparent; }
.track .up { top: 6px; border-bottom: 5px solid #a3a3a3; }
.track .down { bottom: 6px; border-top: 5px solid #a3a3a3; }
.chat { flex: 1; min-width: 0; display: flex; flex-direction: column; padding: 0 17px 9px 15px; }
.title { flex: none; margin: 0; height: 36.800px; line-height: 29px; text-align: center; font-size: 22px; font-weight: 600; color: #fff; }
.scrollwrap { flex: 1; min-height: 0; display: flex; }
.msgs { flex: 1; min-width: 0; display: flex; flex-direction: column; gap: 10px; overflow: hidden; }
.track-msg { width: 16px; }
.bub { width: max-content; padding: 10px; border-radius: 12px; }
.bub-wide { width: 40%; }
.other { background: #555; }
.mine { background: #007bff; margin-left: auto; }
.who { margin: 0 0 8px; font-size: 15.200px; line-height: 19.200px; font-weight: 600; color: #fff; }
.say { margin: 0; line-height: 24px; color: #fff; }
.send { flex: none; display: flex; gap: 5px; margin: 11px 0 0 10px; }
.send-in { width: 282px; height: 38px; padding: 0 13px; font: inherit; color: #495057; background: #fff; border: 1px solid #ced4da; border-radius: 4px; }
.send-btn { width: 138px; height: 38px; padding: 0; font: inherit; color: #fff; background: #007bff; border: 0; border-radius: 4px; }
.send-active { background: #0062cc; }

/* downloads */
.downloads { flex: none; height: 57px; background: #fff; display: flex; align-items: center; border-top: 1px solid #e2e3e5; color: #3c4043; font-size: 12px; }
.dl { height: 42px; display: flex; align-items: center; padding-left: 9px; border-right: 1px solid #c9cbce; flex: none; }
.dl1 { width: 225px; }
.dl2 { width: 232px; padding-left: 18px; }
.dl-name { margin-left: 13px; }
.dl-chev { margin-left: auto; margin-right: 17px; color: #5f6368; }
.show { width: 78px; height: 30px; margin-left: 113px; border: 1px solid #dadce0; border-radius: 4px; display: flex; align-items: center; justify-content: center; color: #1a73e8; font-size: 11.300px; flex: none; }
.dl-x { margin-left: 12px; font-size: 15px; color: #5f6368; }

/* seam under windows */
.seam { position: absolute; left: 0; right: 0; top: 700px; height: 7px; border-bottom: 1px solid #5fa6c0; }
.seam i { position: absolute; top: 0; bottom: 0; width: 1px; background: #5b9cb5; }
.seam .s1 { left: 47px; }
.seam .s2 { left: 217px; }
.seam .s3 { left: 1352px; }

/* editor status bar */
.status { position: absolute; left: 0; right: 0; top: 707px; height: 21px; background: #000; display: flex; align-items: center; padding-left: 17px; font-size: 11.500px; color: #fff; }
.st-main { margin-left: 4px; }
.sync { margin-left: 14px; }
.err { margin-left: 16px; margin-right: 3px; }
.num { margin-right: 4px; }
.warn { margin-right: 3px; }
.st-right { margin-left: auto; display: flex; align-items: center; padding-right: 14px; }
.st2, .st3, .st4, .st5 { margin-left: 16px; }
.st-person { margin-left: 17px; }
.st-bell { margin-left: 16px; }

/* taskbar */
.taskbar { position: absolute; left: 0; right: 0; top: 728px; height: 40px; display: flex; align-items: center; background: linear-gradient(90deg, #21333d, #1f3340 55%, #1b2a42); }
.start { width: 49px; display: flex; justify-content: center; flex: none; }
.search { width: 343px; height: 40px; background: #f1f1f1; display: flex; align-items: center; overflow: hidden; flex: none; border-bottom: 2px solid #b8b8b8; }
.lens { margin-left: 12px; }
.search-txt { margin-left: 11px; color: #222; font-size: 13.800px; }
.art { margin-left: auto; }
.apps { display: flex; height: 40px; flex: none; }
.app { width: 49.100px; height: 40px; display: flex; align-items: center; justify-content: center; position: relative; flex: none; }
.app-on::after { content: ""; position: absolute; left: 4px; right: 5px; bottom: 0; height: 2px; background: #76b9ed; }
.is-active { background: #47555f; }
.is-active::after { left: 0; right: 0; }
.badge-num { font-size: 9px; font-family: "Open Sans", sans-serif; fill: #fff; }
.tray { margin-left: auto; display: flex; align-items: center; padding-right: 17px; font-size: 13px; color: #fff; flex: none; }
.tr-temp { margin-left: 8px; width: 30px; white-space: nowrap; }
.tr-up { margin-left: 18px; }
.tr-meet { margin-left: 11px; }
.tr-drive { margin-left: 6px; }
.tr-bat { margin-left: 9px; }
.tr-wifi { margin-left: 11px; }
.tr-vol { margin-left: 6px; }
.clock { width: 72px; text-align: center; display: flex; flex-direction: column; font-size: 12.300px; line-height: 18px; }
.notif { width: 32px; position: relative; display: flex; justify-content: center; }
.notif-n { position: absolute; left: 12px; top: 6px; width: 20px; height: 20px; border-radius: 50%; background: #3a3f44; border: 1px solid #888; text-align: center; font-size: 11px; line-height: 18px; font-weight: 600; }
```
